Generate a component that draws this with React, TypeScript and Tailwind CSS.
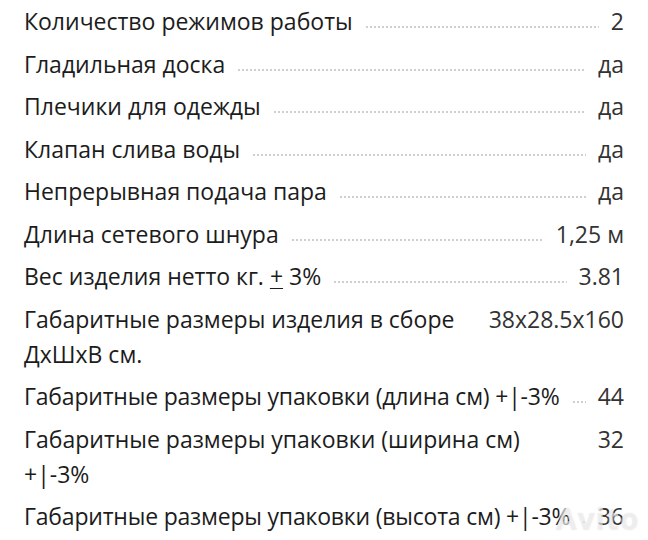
import React from "react";

type Row = { label: React.ReactNode; value: string; nowrap?: boolean };

const rows: Row[] = [
  { label: "Количество режимов работы", value: "2" },
  { label: "Гладильная доска", value: "да" },
  { label: "Плечики для одежды", value: "да" },
  { label: "Клапан слива воды", value: "да" },
  { label: "Непрерывная подача пара", value: "да" },
  { label: "Длина сетевого шнура", value: "1,25 м" },
  {
    label: (
      <>
        Вес изделия нетто кг. <span className="underline underline-offset-[3px] decoration-1">+</span> 3%
      </>
    ),
    value: "3.81",
  },
  { label: "Габаритные размеры изделия в сборе ДхШхВ см.", value: "38x28.5x160" },
  { label: "Габаритные размеры упаковки (длина см) +|-3%", value: "44", nowrap: true },
  { label: "Габаритные размеры упаковки (ширина см) +|-3%", value: "32" },
  { label: "Габаритные размеры упаковки (высота см) +|-3%", value: "36", nowrap: true },
];

export default function App() {
  return (
    <div
      className="relative w-[648px] h-[540px] overflow-hidden bg-white"
      style={{ fontFamily: '"Open Sans", "Noto Sans", sans-serif' }}
    >
      <div className="flex flex-col gap-[7.5px] pl-6 pr-6 pt-[4px] text-[23px] leading-[35px]">
        {rows.map((r, i) => (
          <div key={i} className="flex items-baseline">
            <span
              className={
                r.nowrap
                  ? "min-w-0 whitespace-nowrap tracking-[-0.2px] text-[#1c1c1c]"
                  : "min-w-0 text-[#1c1c1c]"
              }
            >
              {r.label}
            </span>
            <span className="mx-3 h-[2px] min-w-0 flex-1 translate-y-[-2px] bg-[radial-gradient(circle,#cfcfcf_0.8px,transparent_1.1px)] bg-[length:4px_2px] bg-repeat-x"></span>
            <span className="shrink-0 whitespace-nowrap text-[#333333]">{r.value}</span>
          </div>
        ))}
      </div>
      <div
        className="absolute left-[556px] top-[496px] text-[30px] font-bold tracking-[1px] text-[rgba(255,255,255,0.55)]"
        style={{
          fontFamily: '"Open Sans", sans-serif',
          textShadow: "0 0 1px rgba(150,150,150,0.35)",
        }}
      >
        Avito
      </div>
    </div>
  );
}
